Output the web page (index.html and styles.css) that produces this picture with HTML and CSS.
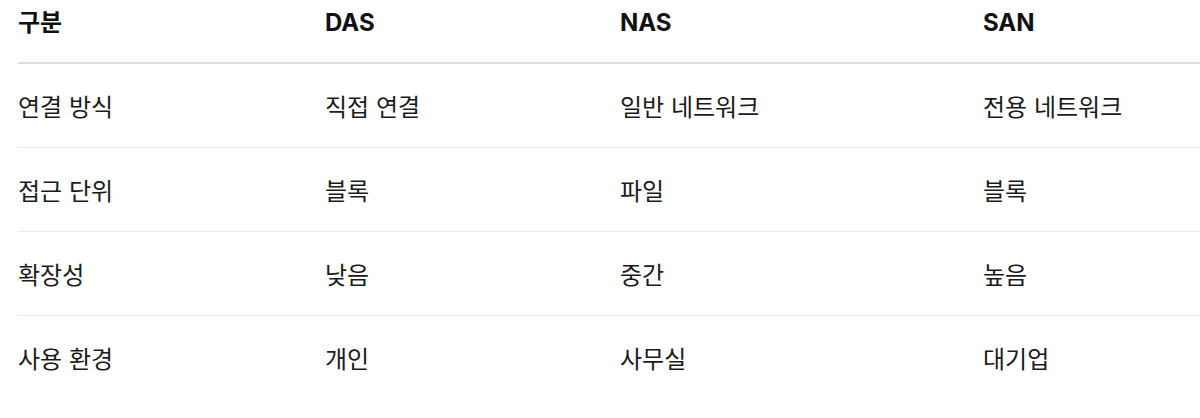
FILE: index.html
```html
<!DOCTYPE html>
<html lang="ko">
<head>
<meta charset="utf-8">
<link rel="stylesheet" href="styles.css">
</head>
<body>
<div class="wrap">
  <table class="cmp">
    <colgroup>
      <col class="c1"><col class="c2"><col class="c3"><col class="c4">
    </colgroup>
    <thead>
      <tr><th>구분</th><th>DAS</th><th>NAS</th><th>SAN</th></tr>
    </thead>
    <tbody>
      <tr><td>연결 방식</td><td>직접 연결</td><td>일반 네트워크</td><td>전용 네트워크</td></tr>
      <tr><td>접근 단위</td><td>블록</td><td>파일</td><td>블록</td></tr>
      <tr><td>확장성</td><td>낮음</td><td>중간</td><td>높음</td></tr>
      <tr><td>사용 환경</td><td>개인</td><td>사무실</td><td>대기업</td></tr>
    </tbody>
  </table>
</div>
</body>
</html>
```
FILE: styles.css
```css
html, body {
  margin: 0;
  padding: 0;
  background: #ffffff;
}
body {
  font-family: Inter, "Noto Sans CJK KR", sans-serif;
  color: #1a1a1a;
}
.wrap {
  padding-left: 18px;
  overflow: hidden;
}
.cmp {
  width: 1182px;
  border-collapse: collapse;
  table-layout: fixed;
  font-size: 24px;
  line-height: 36px;
}
.c1 { width: 307px; }
.c2 { width: 295px; }
.c3 { width: 363px; }
.cmp th {
  text-align: left;
  font-weight: 700;
  color: #111111;
  padding: 5px 0 21px 0;
  border-bottom: 2px solid #dedede;
}
.cmp td {
  padding: 26px 0 21px 0;
  font-weight: 400;
  border-bottom: 1px solid #ebebeb;
}
.cmp tbody tr:last-child td {
  border-bottom: none;
}
```
